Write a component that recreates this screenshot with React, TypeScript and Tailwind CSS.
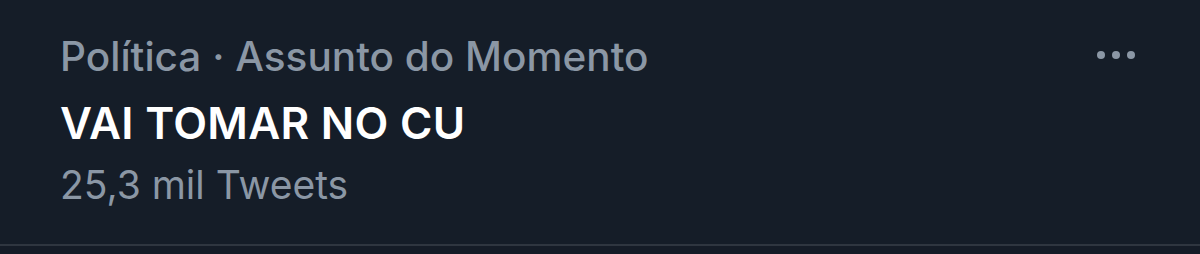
import React from "react";

function TrendItem() {
  return (
    <div className="flex h-[246px] w-full justify-between border-b-2 border-[#2f3640] bg-[#151d28] pl-[60px] pr-[65px] pt-[25px]">
      <div className="flex flex-col">
        <span className="text-[40.5px] leading-[64px] font-medium text-[#8b97a5]">
          Política · Assunto do Momento
        </span>
        <span className="text-[44px] leading-[68px] font-semibold tracking-[0.3px] text-white">
          VAI TOMAR NO CU
        </span>
        <span className="text-[39px] leading-[56px] text-[#8b97a5]">
          25,3 mil Tweets
        </span>
      </div>
      <div className="flex h-[60px] items-center gap-[7px]">
        <span className="h-[8px] w-[8px] rounded-full bg-[#8b97a5]" />
        <span className="h-[8px] w-[8px] rounded-full bg-[#8b97a5]" />
        <span className="h-[8px] w-[8px] rounded-full bg-[#8b97a5]" />
      </div>
    </div>
  );
}

export default function App() {
  return (
    <div
      className="h-[254px] w-[1200px] bg-[#151c27]"
      style={{ fontFamily: "Inter, 'Noto Sans', sans-serif" }}
    >
      <TrendItem />
    </div>
  );
}
